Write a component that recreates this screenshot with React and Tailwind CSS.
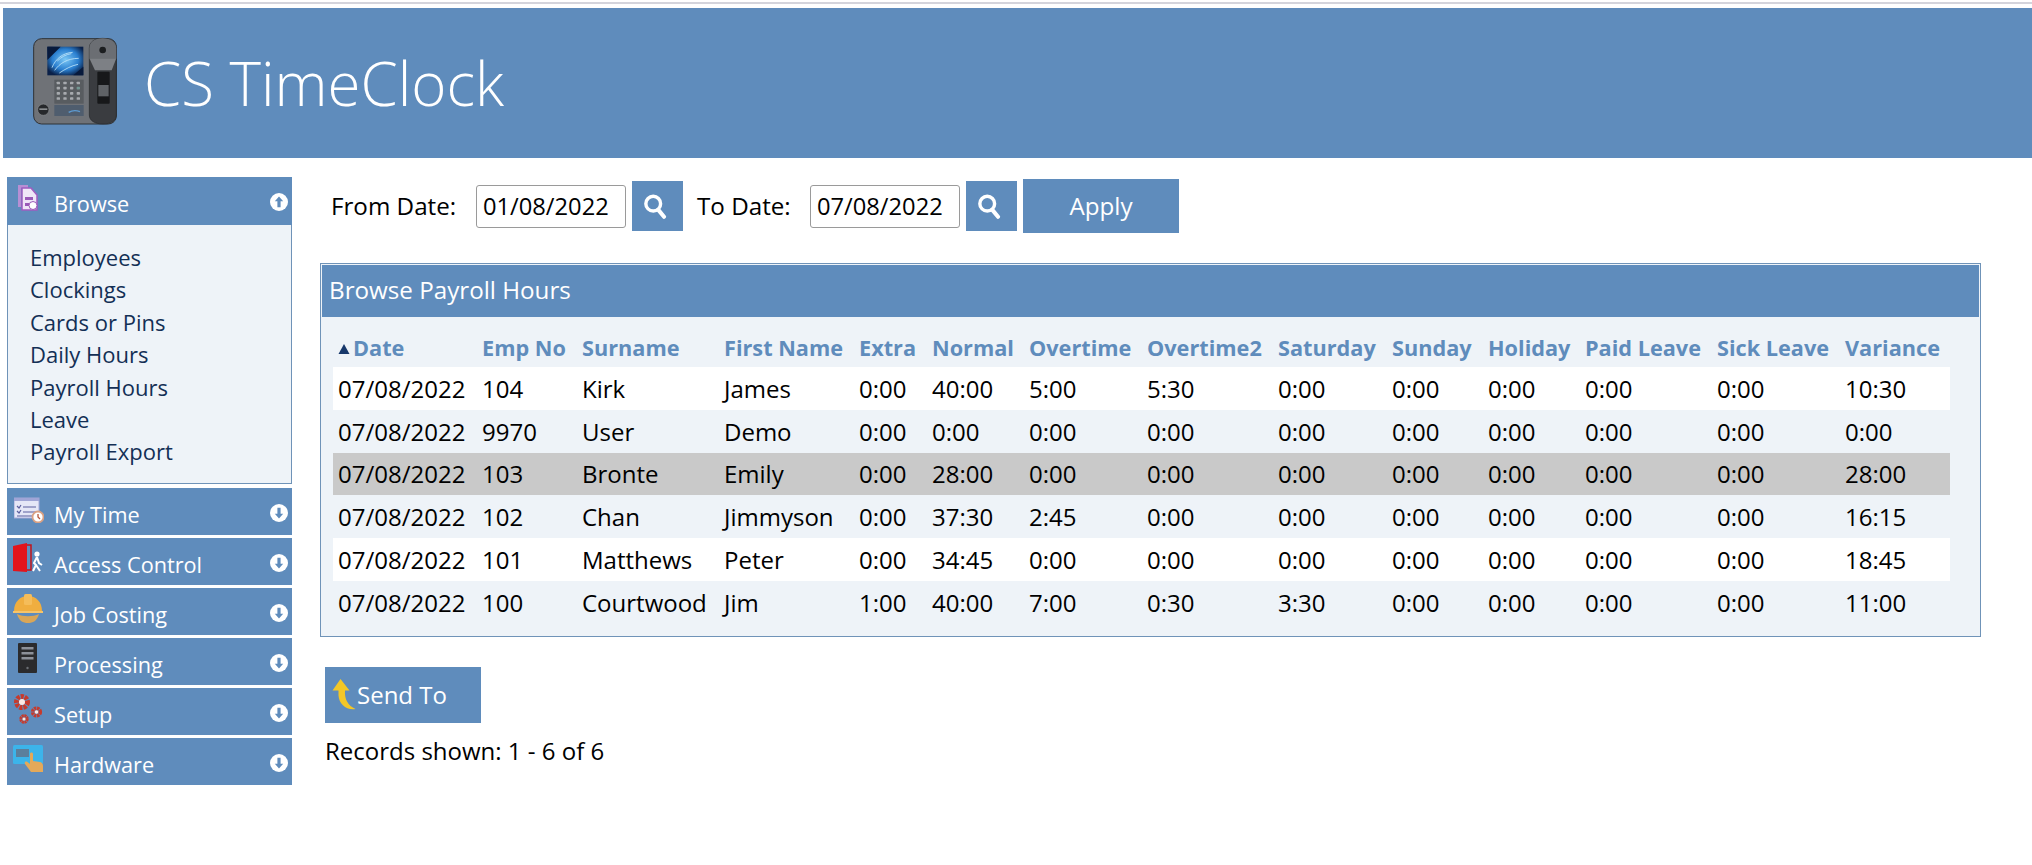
import React from "react";

const columns = [
  { label: "Date", w: "w-[144px]" },
  { label: "Emp No", w: "w-[100px]" },
  { label: "Surname", w: "w-[142px]" },
  { label: "First Name", w: "w-[135px]" },
  { label: "Extra", w: "w-[73px]" },
  { label: "Normal", w: "w-[97px]" },
  { label: "Overtime", w: "w-[118px]" },
  { label: "Overtime2", w: "w-[131px]" },
  { label: "Saturday", w: "w-[114px]" },
  { label: "Sunday", w: "w-[96px]" },
  { label: "Holiday", w: "w-[97px]" },
  { label: "Paid Leave", w: "w-[132px]" },
  { label: "Sick Leave", w: "w-[128px]" },
  { label: "Variance", w: "w-[110px]" },
];

const rows = [
  { bg: "bg-white", h: "h-[43px]", cells: ["07/08/2022", "104", "Kirk", "James", "0:00", "40:00", "5:00", "5:30", "0:00", "0:00", "0:00", "0:00", "0:00", "10:30"] },
  { bg: "bg-[#eef3f8]", h: "h-[43px]", cells: ["07/08/2022", "9970", "User", "Demo", "0:00", "0:00", "0:00", "0:00", "0:00", "0:00", "0:00", "0:00", "0:00", "0:00"] },
  { bg: "bg-[#c9c9c9]", h: "h-[42px]", cells: ["07/08/2022", "103", "Bronte", "Emily", "0:00", "28:00", "0:00", "0:00", "0:00", "0:00", "0:00", "0:00", "0:00", "28:00"] },
  { bg: "bg-[#eef3f8]", h: "h-[43px]", cells: ["07/08/2022", "102", "Chan", "Jimmyson", "0:00", "37:30", "2:45", "0:00", "0:00", "0:00", "0:00", "0:00", "0:00", "16:15"] },
  { bg: "bg-white", h: "h-[43px]", cells: ["07/08/2022", "101", "Matthews", "Peter", "0:00", "34:45", "0:00", "0:00", "0:00", "0:00", "0:00", "0:00", "0:00", "18:45"] },
  { bg: "bg-[#eef3f8]", h: "h-[43px]", cells: ["07/08/2022", "100", "Courtwood", "Jim", "1:00", "40:00", "7:00", "0:30", "3:30", "0:00", "0:00", "0:00", "0:00", "11:00"] },
];

const browseLinks = ["Employees", "Clockings", "Cards or Pins", "Daily Hours", "Payroll Hours", "Leave", "Payroll Export"];

// device picture in the header, coordinates follow the 3x crop of the reference
const Logo = () => {
  const keys = [];
  for (let r = 0; r < 4; r++) {
    for (let c = 0; c < 4; c++) {
      keys.push(<rect key={r + "-" + c} x={110 + c * 20} y={170 + r * 15.5} width="10" height="8" rx="2" fill={c === 3 && r === 1 ? "#7fb0a8" : "#c9ccd0"} opacity="0.7" />);
    }
  }
  return (
    <svg width="90" height="90" viewBox="30 33 270 270">
      <defs>
        <radialGradient id="scr" cx="0.5" cy="0.45" r="0.6">
          <stop offset="0" stopColor="#7cc8f5" />
          <stop offset="0.6" stopColor="#2a7fd0" />
          <stop offset="1" stopColor="#0a2048" />
        </radialGradient>
      </defs>
      <rect x="41" y="41" width="248" height="256" rx="24" fill="#6f7277" stroke="#2f3236" strokeWidth="3" />
      <rect x="82" y="65" width="108" height="86" fill="url(#scr)" />
      <path d="M96 128c10-26 32-44 62-46M104 136c14-20 38-36 72-36M118 144c18-12 36-22 56-26M112 108c12-12 26-20 42-22" stroke="#c4e8fb" strokeWidth="3" fill="none" opacity="0.8" />
      <path d="M82 65h40l-40 40zM190 151h-30l30-26z" fill="#081a3c" />
      <rect x="103" y="164" width="88" height="72" fill="#585c60" />
      {keys}
      <rect x="103" y="240" width="88" height="33" fill="#4f5d6e" />
      <path d="M146 262c10-6 24-6 34-2" stroke="#5d9ad0" strokeWidth="4" fill="none" />
      <circle cx="70" cy="254" r="17" fill="#26282b" stroke="#8a8d90" strokeWidth="2" />
      <rect x="58" y="250" width="24" height="5" fill="#8a8d90" />
      <path d="M208 70c0-18 14-30 40-30s41 12 41 30v200c0 16-14 27-40 27s-41-11-41-27z" fill="#3a3c40" stroke="#25272a" strokeWidth="2" />
      <path d="M208 70c0-18 14-30 40-30s41 12 41 30v30h-81z" fill="#6b6e73" />
      <path d="M208 100h81l-14 36h-50z" fill="#7d8085" />
      <circle cx="248" cy="75" r="10" fill="#1c1e20" />
      <rect x="232" y="140" width="37" height="96" rx="3" fill="#17181a" />
      <rect x="235" y="180" width="31" height="34" fill="#5f6266" />
    </svg>
  );
};

const SearchIcon = () => (
  <svg width="25" height="25" viewBox="0 0 22 22" fill="none">
    <circle cx="9" cy="8.500" r="6.500" stroke="#fff" strokeWidth="3" />
    <path d="M13.500 14l5 6" stroke="#fff" strokeWidth="3.600" strokeLinecap="round" />
  </svg>
);

const ArrowCircle = ({ up }) => (
  <svg width="18" height="18" viewBox="0 0 18 18" className="shrink-0">
    <circle cx="9" cy="9" r="9" fill="#fff" />
    <path d={up ? "M9 3.500l4.200 4.800h-2.600v6H7.400v-6H4.800z" : "M9 14.500l4.200-4.800h-2.600v-6H7.400v6H4.800z"} fill="#5f8cbc" />
  </svg>
);

const BrowseIcon = () => (
  <svg width="22" height="27" viewBox="0 0 22 27">
    <path d="M1 1h10v3H4v19H1z" fill="#b78fd4" />
    <path d="M5 4h9l6 7v15H5z" fill="#efe6f7" stroke="#a05cc0" strokeWidth="1.500" />
    <path d="M8 13h8v3H8zM8 19h4v3H8z" fill="#9a5ab8" />
    <circle cx="16" cy="21.500" r="4" fill="#fff" stroke="#9a5ab8" />
  </svg>
);

const TimeIcon = () => (
  <svg width="30" height="26" viewBox="0 0 30 26">
    <rect x="0" y="1" width="25" height="20" fill="#e5e7f7" stroke="#a4a8d8" />
    <rect x="0" y="1" width="25" height="3" fill="#a0a5d6" />
    <path d="M3 9l2 2 2-3M3 14l2 2 2-3M9 10h13M9 15h13M3 19h19" stroke="#5d61a0" strokeWidth="1.200" fill="none" />
    <circle cx="24" cy="20" r="5.500" fill="#fff" stroke="#d9a184" strokeWidth="1.800" />
    <path d="M24 17v3l2 2" stroke="#b5563a" strokeWidth="1.300" fill="none" />
  </svg>
);

const DoorIcon = () => (
  <svg width="30" height="30" viewBox="0 0 30 30">
    <path d="M0 3l14-3v29l-14-1z" fill="#e3131b" />
    <path d="M14 2h4v25h-4" fill="none" stroke="#c2141b" strokeWidth="1.500" />
    <circle cx="24" cy="11" r="2.600" fill="#fff" />
    <path d="M24 14l-3 6 2 2-3 6M24 14l2 6 3 2M23 22l4 6" stroke="#fff" strokeWidth="2" fill="none" />
  </svg>
);

const HatIcon = () => (
  <svg width="30" height="30" viewBox="0 0 30 30">
    <path d="M1 17c0-9 6-15 14-15s14 6 14 15z" fill="#f0ae3f" />
    <rect x="11" y="0" width="8" height="11" rx="1.500" fill="#f5bd5a" />
    <path d="M0 17h30v2H0z" fill="#f6c469" />
    <path d="M4 20c2 7 6 9 11 9s9-2 11-9c-6 3-16 3-22 0z" fill="#d9a657" />
  </svg>
);

const TowerIcon = () => (
  <svg width="19" height="30" viewBox="0 0 19 30">
    <rect width="19" height="30" rx="1" fill="#2b2b2d" />
    <path d="M3.500 4h12v2.400h-12zM3.500 9h12v2.400h-12zM3.500 14h12v2.400h-12z" fill="#8d9199" />
    <circle cx="9.500" cy="25" r="1.200" fill="#6c6f74" />
  </svg>
);

const GearsIcon = () => (
  <svg width="30" height="30" viewBox="0 0 30 30">
    <circle cx="9" cy="8" r="5.500" fill="none" stroke="#c73a2c" strokeWidth="5" strokeDasharray="3 1" />
    <circle cx="9" cy="8" r="3" fill="#fbe9e4" />
    <circle cx="23.500" cy="18" r="3.800" fill="none" stroke="#c73a2c" strokeWidth="3.600" strokeDasharray="2.300 0.700" />
    <circle cx="23.500" cy="18" r="1.800" fill="#fbe9e4" />
    <circle cx="11" cy="25" r="3.200" fill="none" stroke="#c73a2c" strokeWidth="3" strokeDasharray="2 0.500" />
    <circle cx="11" cy="25" r="1.500" fill="#fbe9e4" />
  </svg>
);

const HardwareIcon = () => (
  <svg width="31" height="28" viewBox="0 0 31 28">
    <rect y="0" width="30" height="19" rx="1.500" fill="#3cb4ea" />
    <rect x="3" y="4" width="13" height="8" fill="#5b7f9c" />
    <path d="M17 9c0-2 3-2 3 0v7l7 1c2 .4 3 2 3 4v6H18l-6-8c-1-2 1-3 2.500-2l2.500 2z" fill="#e4a959" />
  </svg>
);

const SendIcon = () => (
  <svg width="24" height="32" viewBox="0 0 24 32">
    <path d="M8.500 0l9 11.500h-4.500c-.6 9 3 15 10.500 18.500-9 1.500-16.500-5-17-13.500v-5H.500z" fill="#f3c727" />
  </svg>
);

const SideHead = ({ icon, box, label, up, tall }) => (
  <div className={"flex bg-[#5f8cbc] w-[285px] relative " + (tall ? "h-[48px]" : "h-[47px]")}>
    <div className={"w-[47px] shrink-0 " + box}>{icon}</div>
    <div className="text-[21.700px] text-white leading-[30px] pt-[12px]">{label}</div>
    <div className="absolute right-[4px] top-[16px]"><ArrowCircle up={up} /></div>
  </div>
);

const DateField = ({ value }) => (
  <input
    readOnly
    value={value}
    className="w-[150px] h-[43px] border border-[#9a9a9a] rounded-[3px] bg-white pl-[6px] text-[23.700px] text-black outline-none"
  />
);

const SearchButton = () => (
  <div className="w-[51px] h-[50px] bg-[#5f8cbc] flex items-center justify-center pr-[5px]"><SearchIcon /></div>
);

export default function App() {
  return (
    <div className="min-h-[865px] bg-white font-['Open_Sans',sans-serif] text-black overflow-hidden">
      <div className="h-[8px] pt-[2px]"><div className="h-[2px] bg-[#d4d4dc]"></div></div>

      <div className="ml-[3px] h-[150px] bg-[#5f8cbc] flex items-start pl-[27px] pt-[28px]">
        <Logo />
        <h1 className="ml-[24px] mt-[12px] text-[60px] leading-[70px] font-light text-white">CS TimeClock</h1>
      </div>

      <div className="flex mt-[19px]">
        <div className="ml-[7px] w-[285px] shrink-0">
          <SideHead icon={<BrowseIcon />} box="pl-[10px] pt-[7px]" label="Browse" up tall />
          <div className="h-[259px] bg-[#eef3f8] border border-t-0 border-[#6f93b8] pl-[22px] pt-[16px] text-[22px] leading-[32.400px] text-[#132f55]">
            {browseLinks.map((l) => (
              <div key={l}>{l}</div>
            ))}
          </div>
          <div className="flex flex-col gap-[3px] mt-[4px]">
            <SideHead icon={<TimeIcon />} box="pl-[7px] pt-[9px]" label="My Time" />
            <SideHead icon={<DoorIcon />} box="pl-[6px] pt-[5px]" label="Access Control" />
            <SideHead icon={<HatIcon />} box="pl-[6px] pt-[6px]" label="Job Costing" />
            <SideHead icon={<TowerIcon />} box="pl-[11px] pt-[5px]" label="Processing" />
            <SideHead icon={<GearsIcon />} box="pl-[6px] pt-[6px]" label="Setup" />
            <SideHead icon={<HardwareIcon />} box="pl-[6px] pt-[7px]" label="Hardware" />
          </div>
        </div>

        <div className="ml-[28px] w-[1661px]">
          <div className="flex items-center h-[54px] mt-[2px] text-[24.200px]">
            <span className="ml-[11px] w-[145px]">From Date:</span>
            <DateField value="01/08/2022" />
            <div className="ml-[6px]"><SearchButton /></div>
            <span className="ml-[14px] w-[113px]">To Date:</span>
            <DateField value="07/08/2022" />
            <div className="ml-[6px]"><SearchButton /></div>
            <div className="ml-[6px] w-[156px] h-[54px] bg-[#5f8cbc] text-white flex items-center justify-center">Apply</div>
          </div>

          <div className="mt-[30px] h-[374px] border border-[#6f93b8] bg-[#eef3f8] p-px">
            <div className="h-[52px] bg-[#5f8cbc] text-white text-[24.200px] flex items-center pl-[7px] pb-[2px]">Browse Payroll Hours</div>
            <table className="table-fixed border-collapse ml-[11px] mt-[16px] w-[1617px] text-[24px]">
              <colgroup>
                {columns.map((c) => (
                  <col key={c.label} className={c.w} />
                ))}
              </colgroup>
              <thead>
                <tr className="h-[34px]">
                  {columns.map((c, i) => (
                    <th key={c.label} className="pl-[5px] pb-[4px] text-left text-[21.700px] leading-[28px] font-bold text-[#5f8cbc] whitespace-nowrap">
                      {i === 0 && (
                        <svg width="12" height="10" viewBox="0 0 12 10" className="inline mr-[3px] mb-[3px]">
                          <path d="M6 0l5.500 10H.500z" fill="#17386b" />
                        </svg>
                      )}
                      {c.label}
                    </th>
                  ))}
                </tr>
              </thead>
              <tbody>
                {rows.map((r, i) => (
                  <tr key={i} className={r.bg + " " + r.h}>
                    {r.cells.map((v, j) => (
                      <td key={j} className="pl-[5px] p-0 whitespace-nowrap">{v}</td>
                    ))}
                  </tr>
                ))}
              </tbody>
            </table>
          </div>

          <div className="ml-[5px] mt-[30px] w-[156px] h-[56px] bg-[#5f8cbc] text-white text-[24px] flex items-center pl-[7px]">
            <SendIcon />
            <span className="ml-[1px]">Send To</span>
          </div>
          <div className="ml-[5px] mt-[12px] text-[24px] leading-[32px]">Records shown: 1 - 6 of 6</div>
        </div>
      </div>
    </div>
  );
}
